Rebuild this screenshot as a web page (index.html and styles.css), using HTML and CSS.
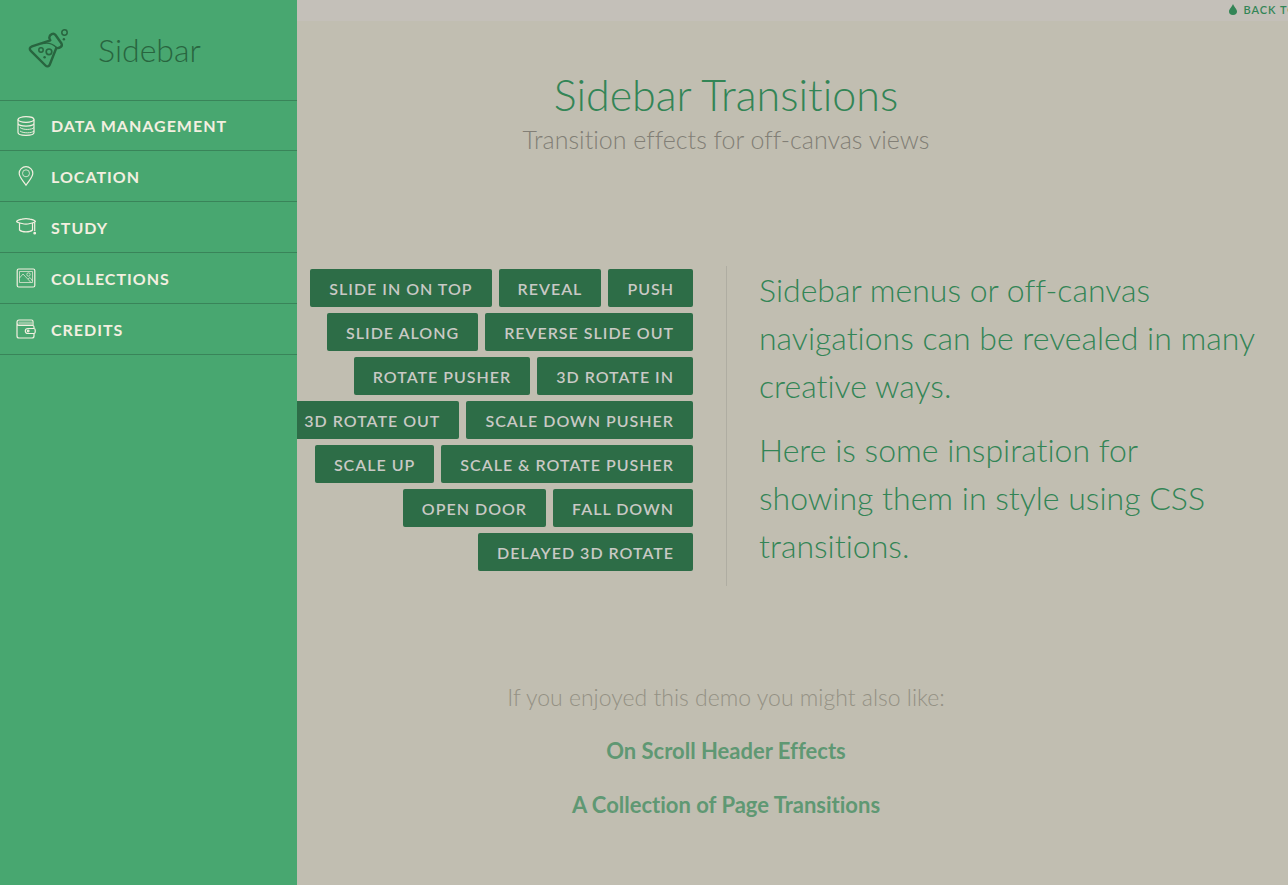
FILE: index.html
```html
<!DOCTYPE html>
<html lang="en">
<head>
<meta charset="utf-8">
<title>Sidebar Transitions</title>
<link rel="stylesheet" href="styles.css">
</head>
<body>
<div class="container">
  <nav class="menu">
    <h2 class="menu-title">
      <svg class="lab-icon" viewBox="0 0 42 42" fill="none" stroke="currentColor" stroke-width="2.4" stroke-linejoin="round" stroke-linecap="round" aria-hidden="true">
        <path d="M27.500 7 C25.500 4.500 21.500 6.500 21.300 9.500 Q21.300 11 22.300 12.300 L4 18.300 C1.500 19.200 1.200 21.300 2.800 22.800 L17.500 37.500 C19 39 21 38.500 21.700 36.800 L28.300 20 C31.500 20.600 35 18.300 33.500 15.500 Z"/>
        <path d="M14 15.800 C20 14 25 16 28.500 19.500" stroke-width="1.200"/>
        <circle cx="13" cy="22" r="2.200" stroke-width="1.500"/>
        <circle cx="21" cy="23.800" r="2.800" stroke-width="1.700"/>
        <circle cx="16.600" cy="29.200" r="1.200" fill="currentColor" stroke="none"/>
        <circle cx="35.900" cy="11.300" r="1.200" fill="currentColor" stroke="none"/>
        <circle cx="36.500" cy="4.500" r="2.700" stroke-width="1.500"/>
      </svg>
      <span>Sidebar</span>
    </h2>
    <ul class="menu-list">
      <li><a class="menu-link" href="#data">
        <svg class="icon" viewBox="0 0 20 20" aria-hidden="true"><ellipse cx="10" cy="3.500" rx="8" ry="2.800"/><path d="M2 3.500V16.500C2 20.300 18 20.300 18 16.500V3.500M2 7.500C3 10.900 17 10.900 18 7.500"/><path d="M4 11.500C7 14.200 16 14 18 11.500M4 15C7 17.500 16 17.300 18 15" stroke-width=".9"/></svg>
        <span>Data Management</span></a></li>
      <li><a class="menu-link" href="#location">
        <svg class="icon" viewBox="0 0 20 20" aria-hidden="true"><path d="M10 19.200C7.500 15 3.200 11.500 3.200 7.300A6.800 6.600 0 0 1 16.800 7.300C16.800 11.500 12.500 15 10 19.200Z"/><circle cx="10" cy="7.300" r="3.500" stroke-width=".8"/></svg>
        <span>Location</span></a></li>
      <li><a class="menu-link" href="#study">
        <svg class="icon" viewBox="0 0 20 20" aria-hidden="true"><path d="M.6 4.500Q1 3.200 6 2.200Q10 1.200 14 2.200Q19 3.200 19.400 4.500Q19 5.500 14 6.500Q10 7.600 6 6.500Q1 5.500 .6 4.500ZM3.500 6.500V13C6 15.500 14 15.500 16.500 13V6.500M18.700 5V14"/><circle cx="18.700" cy="16.200" r=".8" fill="currentColor"/></svg>
        <span>Study</span></a></li>
      <li><a class="menu-link" href="#collections">
        <svg class="icon" viewBox="0 0 20 20" aria-hidden="true"><rect x="1.200" y="1" width="17.600" height="18" rx="1.500"/><g stroke-width=".7"><path d="M3.500 3.500H16.500V14.500H3.500ZM3.500 10L7 6L15 14.500M12 11L14 9.500L16.500 13"/><circle cx="12.500" cy="6.500" r="1.700"/></g></svg>
        <span>Collections</span></a></li>
      <li><a class="menu-link" href="#credits">
        <svg class="icon" viewBox="0 0 20 20" aria-hidden="true"><path d="M2.500 2.500H16V6H2.500Z" fill="currentColor" fill-opacity=".45" stroke="none"/><path d="M1 3.500V17Q1 19 3 19H16Q18 19 18 17V14.500M18 9.500V8Q18 6.500 16.500 6.500H3Q1 6.500 1 3.500Q1 1 3 1H15.500Q17 1 17 2.500V6.500M17.700 9.500H12Q9.300 9.500 9.300 12Q9.300 14.500 12 14.500H17.700Q19.200 14.500 19.200 13V11Q19.200 9.500 17.700 9.500Z"/><circle cx="12.200" cy="12" r=".8"/></svg>
        <span>Credits</span></a></li>
    </ul>
  </nav>
  <div class="pusher">
    <div class="top-bar">
      <a class="top-link" href="#back"><svg class="drop" viewBox="0 0 8 11" aria-hidden="true"><path d="M4 0C5 3 8 5 8 7.500A4 3.500 0 0 1 0 7.500C0 5 3 3 4 0Z" fill="currentColor"/></svg>Back to</a>
    </div>
    <header class="page-header">
      <h1 class="page-title">Sidebar Transitions</h1>
      <p class="page-subtitle">Transition effects for off-canvas views</p>
    </header>
    <main class="main">
      <div class="column effects">
        <button type="button">Slide in on top</button>
        <button type="button">Reveal</button>
        <button type="button">Push</button>
        <button type="button">Slide along</button>
        <button type="button">Reverse slide out</button>
        <button type="button">Rotate pusher</button>
        <button type="button">3D rotate in</button>
        <button type="button">3D rotate out</button>
        <button type="button">Scale down pusher</button>
        <button type="button">Scale up</button>
        <button type="button">Scale &amp; rotate pusher</button>
        <button type="button">Open door</button>
        <button type="button">Fall down</button>
        <button type="button">Delayed 3D rotate</button>
      </div>
      <div class="column intro">
        <p>Sidebar menus or off-canvas navigations can be revealed in many creative ways.</p>
        <p>Here is some inspiration for showing them in style using CSS transitions.</p>
      </div>
    </main>
    <footer class="related">
      <p>If you enjoyed this demo you might also like:</p>
      <a href="#headers">On Scroll Header Effects</a>
      <a href="#transitions">A Collection of Page Transitions</a>
    </footer>
  </div>
</div>
</body>
</html>
```
FILE: styles.css
```css
*, *::before, *::after { box-sizing: border-box; }

body {
  margin: 0;
  background: #c1beb1;
  color: #338556;
  font-family: Lato, "Liberation Sans", sans-serif;
  font-variant-ligatures: none;
}

h1, h2, p, ul { margin: 0; padding: 0; font-weight: 300; }
a { color: inherit; text-decoration: none; }

.container {
  position: relative;
  min-height: 100vh;
  overflow: hidden;
}

/* Open sidebar, lying over the pushed page */
.menu {
  position: absolute;
  inset: 0 auto 0 0;
  z-index: 1;
  width: 297px;
  background: #48a770;
}

.menu-title {
  display: flex;
  align-items: center;
  gap: 28px;
  height: 100px;
  padding: 0 0 2px 28px;
  color: #28653f;
  font-size: 32px;
}

.lab-icon { width: 42px; height: 42px; }

.menu-list { list-style: none; }
.menu-list li { border-top: 1px solid #398459; }
.menu-list li:last-child { border-bottom: 1px solid #398459; }

.menu-link {
  display: flex;
  align-items: center;
  gap: 15px;
  height: 50px;
  padding-left: 16px;
  color: #f3efe0;
  font-size: 16px;
  font-weight: 700;
  letter-spacing: 1px;
  text-transform: uppercase;
}

.menu-list li:first-child .menu-link { height: 49px; }

.icon {
  width: 20px;
  height: 20px;
  fill: none;
  stroke: currentColor;
  stroke-width: 1.2;
  overflow: visible;
}

.pusher {
  width: 100vw;
  margin-left: 82px;
}

.top-bar {
  display: flex;
  justify-content: flex-end;
  align-items: center;
  height: 21px;
  padding: 0 73px 3px 0;
  background: #c4c0b9;
}

.top-link {
  display: flex;
  align-items: center;
  gap: 6px;
  font-size: 11px;
  font-weight: 600;
  letter-spacing: 1px;
  text-transform: uppercase;
  white-space: nowrap;
}

.drop { width: 8px; height: 11px; }

.page-header {
  padding: 46px 32px 0;
  text-align: center;
}

.page-title { font-size: 43px; line-height: 56px; }
.page-subtitle { color: #827f76; font-size: 25px; line-height: 32px; }

.main {
  display: grid;
  grid-template-columns: 1fr 1fr;
  max-width: 1104px;
  margin: 111px auto 0;
}

.effects {
  display: flex;
  flex-wrap: wrap;
  justify-content: flex-end;
  align-content: flex-start;
  gap: 6px 7px;
  padding: 3px 33px 0 32px;
}

.effects button {
  height: 38px;
  padding: 1px 19px 0;
  border: 0;
  border-radius: 2px;
  background: #2d6d47;
  color: #c9c9c5;
  font: 600 16px Lato, "Liberation Sans", sans-serif;
  letter-spacing: 1px;
  text-transform: uppercase;
}

.intro {
  padding: 0 21px 16px 32px;
  border-left: 1px solid #afada2;
  font-size: 32px;
  line-height: 48px;
}

.intro p + p { margin-top: 16px; }

.related {
  display: flex;
  flex-direction: column;
  align-items: center;
  padding: 95px 0 48px;
  color: #5f9873;
  font-size: 22px;
  font-weight: 700;
  line-height: 32px;
}

.related p { color: #949184; font-size: 23px; }
.related a { margin-top: 22px; }
```
